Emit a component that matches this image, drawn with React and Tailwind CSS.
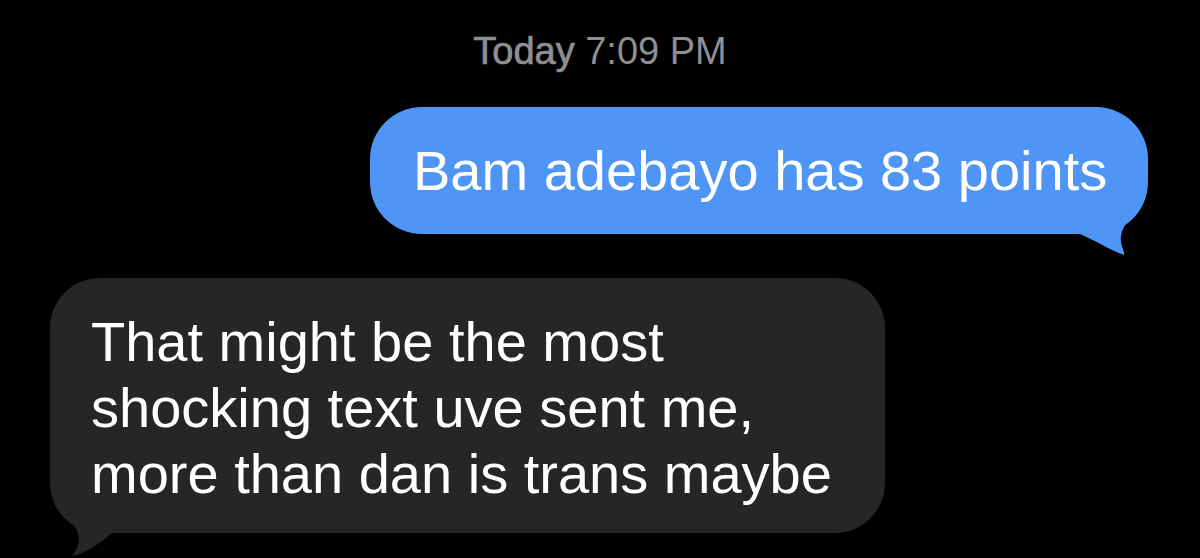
export default function App() {
  return (
    <div className="w-[1200px] h-[558px] bg-black overflow-hidden font-['Liberation_Sans',Arial,sans-serif] flex flex-col">
      {/* timestamp */}
      <div className="pt-[32px] text-center text-[38px] leading-none text-[#8e8e93]">
        <span className="[-webkit-text-stroke:0.7px_#8e8e93]">Today</span> 7:09 PM
      </div>

      {/* sent */}
      <div className="mt-[37px] flex justify-end pr-[52px]">
        <div className="relative">
          <div className="relative z-10 w-[778px] rounded-[52px] bg-[#4e95f6] pl-[43px] pt-[31px] pb-[30px] text-[56px] leading-[66px] text-white">
            Bam adebayo has 83 points
          </div>
          <svg
            className="absolute right-0 bottom-[-22px]"
            width="70"
            height="62"
            viewBox="-70 -40 70 62"
          >
            <path
              d="M -4 -36 C -8 -22, -29 -12, -27 8 C -26 14, -23 19, -24 21 C -34 18, -50 8, -68 0 L -68 -40 Z"
              fill="#4e95f6"
            />
          </svg>
        </div>
      </div>

      {/* received */}
      <div className="mt-[44px] flex pl-[50px]">
        <div className="relative">
          <div className="relative z-10 w-[835px] rounded-[50px] bg-[#262628] pl-[41px] pt-[31px] pb-[26px] text-[56px] leading-[66px] text-white">
            <div>That might be the most</div>
            <div>shocking text uve sent me,</div>
            <div>more than dan is trans maybe</div>
          </div>
          <svg
            className="absolute left-0 bottom-[-25px]"
            width="65"
            height="40"
            viewBox="0 -15 65 40"
          >
            <path
              d="M 20 -12 C 27 -5, 31 3, 28 12 C 27 16, 25 19, 22 23 C 34 21, 48 12, 62 0 L 62 -12 Z"
              fill="#262628"
            />
          </svg>
        </div>
      </div>
    </div>
  );
}
